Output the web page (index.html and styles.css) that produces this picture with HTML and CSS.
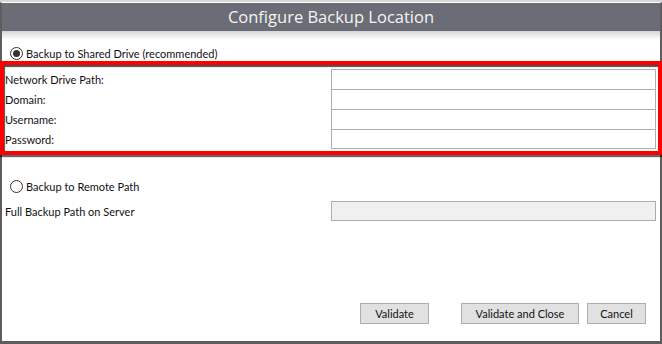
FILE: index.html
```html
<!DOCTYPE html>
<html>
<head>
<meta charset="utf-8">
<link rel="stylesheet" href="styles.css">
</head>
<body>
<div class="behind"></div>
<div class="dialog">
  <div class="titlebar">Configure Backup Location</div>
  <div class="content">
    <div class="radio-row first">
      <span class="radio checked"></span>
      <span class="radio-label">Backup to Shared Drive (recommended)</span>
    </div>
    <div class="highlight">
      <div class="form-grid">
        <div class="label">Network Drive Path:</div>
        <div class="field"></div>
        <div class="label">Domain:</div>
        <div class="field"></div>
        <div class="label">Username:</div>
        <div class="field"></div>
        <div class="label">Password:</div>
        <div class="field last"></div>
      </div>
    </div>
    <div class="radio-row second">
      <span class="radio"></span>
      <span class="radio-label">Backup to Remote Path</span>
    </div>
    <div class="path-row">
      <div class="label">Full Backup Path on Server</div>
      <div class="field disabled"></div>
    </div>
    <div class="buttons">
      <button class="btn btn-validate">Validate</button>
      <button class="btn btn-close">Validate and Close</button>
      <button class="btn btn-cancel">Cancel</button>
    </div>
  </div>
</div>
</body>
</html>
```
FILE: styles.css
```css
html, body {
  margin: 0;
  padding: 0;
  background: #ffffff;
  width: 662px;
  height: 344px;
  overflow: hidden;
}

body {
  font-family: Lato, "Liberation Sans", sans-serif;
  font-size: 11px;
  color: #111111;
}

.behind {
  height: 2px;
  background: #d6d6d6;
}

.dialog {
  box-sizing: border-box;
  width: 662px;
  height: 342px;
  border-left: 2px solid #5d5d5d;
  border-right: 2px solid #5d5d5d;
  border-bottom: 3px solid #5d5d5d;
  border-top: 1px solid #ffffff;
  display: flex;
  flex-direction: column;
}

.titlebar {
  height: 28px;
  line-height: 28px;
  background: #6a6d75;
  color: #f4f4f4;
  text-align: center;
  font-family: "Open Sans", sans-serif;
  font-size: 16.5px;
  flex: none;
}

.content {
  flex: 1;
  display: flex;
  flex-direction: column;
  background: linear-gradient(#d6d6d6, #ffffff 9px);
}

.radio-row {
  display: flex;
  align-items: center;
  height: 15px;
  padding-left: 8px;
}

.radio-row.first {
  margin-top: 15px;
}

.radio-row.second {
  margin-top: 23px;
  height: 16px;
}

.radio {
  box-sizing: border-box;
  width: 13px;
  height: 13px;
  border: 1px solid #333333;
  border-radius: 50%;
  background: #ffffff;
  margin-right: 3px;
  display: flex;
  align-items: center;
  justify-content: center;
  flex: none;
}

.radio.checked::after {
  content: "";
  width: 7px;
  height: 7px;
  border-radius: 50%;
  background: #333333;
}

.radio-label {
  line-height: 15px;
}

.highlight {
  margin: 0 -2px;
  border: 4px solid #ff0000;
  padding: 4px 2px 2px 1px;
  background: #ffffff;
  box-shadow: inset 1px 2px 1px rgba(0, 0, 0, 0.7), 0 2px 1px rgba(0, 0, 0, 0.6);
}

.form-grid {
  display: grid;
  grid-template-columns: 1fr 325px;
  grid-auto-rows: 20px;
}

.label {
  display: flex;
  align-items: center;
  white-space: nowrap;
}

.field {
  box-sizing: border-box;
  height: 20px;
  border: 1px solid #abadb3;
  border-bottom: none;
  background: #ffffff;
}

.field.last {
  border-bottom: 1px solid #abadb3;
}

.path-row {
  display: grid;
  grid-template-columns: 1fr 325px;
  height: 20px;
  margin-top: 7px;
  padding: 0 4px 0 3px;
}

.field.disabled {
  border-bottom: 1px solid #abadb3;
  background: #f0f0f0;
}

.buttons {
  margin-top: auto;
  margin-bottom: 17px;
  display: flex;
  justify-content: flex-end;
  padding-right: 14px;
}

.btn {
  box-sizing: border-box;
  height: 21px;
  padding: 0;
  border: 1px solid #adadad;
  background: #e1e1e1;
  font-family: Lato, "Liberation Sans", sans-serif;
  font-size: 11px;
  color: #111111;
  line-height: 19px;
}

.btn-validate {
  width: 69px;
  margin-right: 32px;
}

.btn-close {
  width: 118px;
  margin-right: 8px;
}

.btn-cancel {
  width: 59px;
}
```
